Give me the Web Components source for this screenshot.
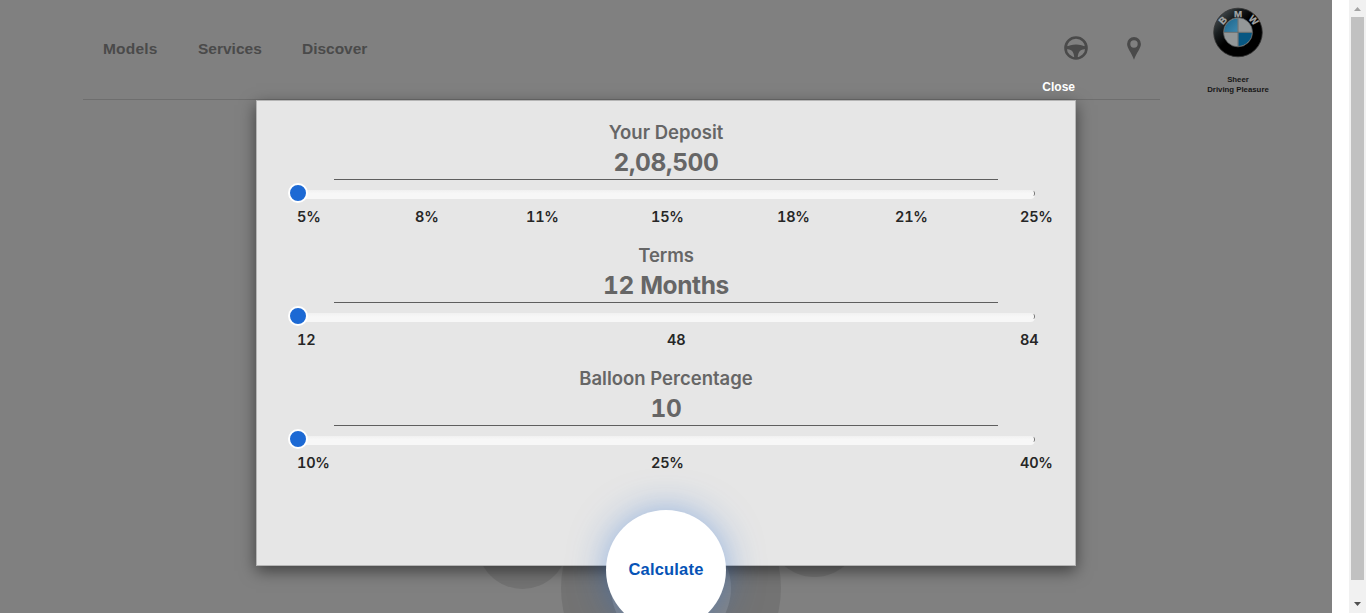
<!DOCTYPE html>
<html lang="en"><head><meta charset="utf-8"><title>Finance calculator</title>
<style>html,body{margin:0;height:613px;overflow:hidden;background:#fff;font-family:"Liberation Sans",Arial,sans-serif}</style></head>
<body><finance-page></finance-page>
<script>
const define=(name,html)=>customElements.define(name,class extends HTMLElement{
  constructor(){super();this.attachShadow({mode:'open'}).innerHTML=html;}
});
define('nav-links',`<style>:host{display:flex;margin:39px 0 0 20px;height:20px;font:bold 15.5px/20px "Liberation Sans",sans-serif;color:#4a4a4a;white-space:nowrap}
span{display:block;letter-spacing:-.02px}.models{width:95px;letter-spacing:.2px}.services{width:104px;letter-spacing:0}</style><span class="models">Models</span><span class="services">Services</span><span>Discover</span>`);
define('wheel-icon',`<style>:host{display:block;width:24px;height:24px}svg{display:block}</style>
<svg width="24" height="24" viewBox="0 0 24 24"><circle cx="12" cy="12" r="10.5" fill="none" stroke="#4a4a4a" stroke-width="2.6"/><path fill="#4a4a4a" d="M2 10.2C5 9.9 7.8 8.4 12 8.4S19 9.9 22 10.2V12.9C17.5 13.1 13.7 14.4 13.7 22.5H10.3C10.3 14.4 6.5 13.1 2 12.9Z"/></svg>`);
define('pin-icon',`<style>:host{display:block;width:14px;height:23px}svg{display:block}</style>
<svg width="14" height="23" viewBox="0 0 14 23"><path fill="#4a4a4a" fill-rule="evenodd" d="M7 .1A6.9 6.9 0 0 0 .1 7C.1 11.3 4.6 15.8 7 22.8C9.4 15.8 13.9 11.3 13.9 7A6.9 6.9 0 0 0 7 .1ZM7 3.3A3.7 3.7 0 1 1 7 10.7A3.7 3.7 0 1 1 7 3.3Z"/></svg>`);
define('brand-logo',`<style>:host{display:block;width:80px;text-align:center;color:#171717;font:bold 7.8px/10px "Liberation Sans",sans-serif}svg{display:block;margin:7px auto 17px}div{white-space:nowrap}</style>
<svg width="52" height="51" viewBox="0 0 52 51"><defs><linearGradient id="r" x1="0" y1=".1" x2=".6" y2=".7"><stop stop-color="#545b5e"/><stop offset=".4" stop-color="#1a1f21"/><stop offset=".7" stop-color="#000"/></linearGradient><linearGradient id="b" x2="1" y2="1"><stop stop-color="#1a6389"/><stop offset="1" stop-color="#3c87ae"/></linearGradient></defs>
<circle cx="26" cy="25.5" r="24.3" fill="url(#r)" stroke="#333" stroke-width=".8"/><circle cx="26" cy="25.3" r="14.5" fill="#939798"/><path d="M25.7 25V11.5A13.9 13.9 0 0 0 12 25Z" fill="url(#b)"/><path d="M26.4 25.7H40A13.8 13.8 0 0 1 26.4 39Z" fill="#075782"/><path d="M26 11V40M11.8 25.3H40.2" stroke="#5f6566" stroke-width=".8"/><circle cx="26" cy="25.3" r="14.6" fill="none" stroke="#54595a" stroke-width=".7"/>
<g fill="#a4a7a8" stroke="#a4a7a8" stroke-width=".25" font-family="Liberation Sans" font-size="9.8" font-weight="bold" text-anchor="middle"><text transform="translate(13.2 15.7) rotate(-49)">B</text><text x="26" y="9.7">M</text><text transform="translate(39 15.4) rotate(48)">W</text></g></svg><div>Sheer</div><div>Driving Pleasure</div>`);
define('site-header',`<style>:host{display:flex;height:100px}.bar{box-sizing:border-box;width:1077px;height:100px;margin-left:83px;border-bottom:1px solid #6e6e6e;display:flex}.icons{display:flex;margin-left:auto;margin-right:19px;gap:39px}wheel-icon{margin-top:36px}pin-icon{margin-top:37px}brand-logo{margin-left:38px}</style>
<div class="bar"><nav-links></nav-links><div class="icons"><wheel-icon></wheel-icon><pin-icon></pin-icon></div></div><brand-logo></brand-logo>`);
define('range-field',`<style>:host{display:block;height:123px;color:#666;text-align:center;font-family:Inter,sans-serif;white-space:nowrap}
.title{height:30px;font:600 18.5px/30px Inter,sans-serif;letter-spacing:var(--ts,0)}.value{box-sizing:border-box;width:664px;height:33px;margin:0 auto;border-bottom:1px solid #5e5e5e;font:700 24.5px/30px Inter,sans-serif;font-variant-numeric:tabular-nums;letter-spacing:var(--vs,-.4px)}
.slider{height:26px;display:flex;align-items:center;padding-left:31px}.thumb{box-sizing:border-box;flex:none;width:20px;height:20px;border:2px solid #fff;border-radius:50%;background:#1c69d4;z-index:1}
.track{box-sizing:border-box;width:737px;height:9px;margin:3px 0 0 -10px;border-radius:5px;background:linear-gradient(#f1f1f1,#f7f7f7 40%);display:flex;justify-content:flex-end}.track:after{content:"";width:3px;height:5px;margin:1px 0;border-right:1px solid #777;border-radius:0 2px 2px 0}
.labels{display:grid;grid-template-columns:var(--cols);margin-left:40px;text-align:left;color:#262626;font:600 14.5px/22px Inter,sans-serif;font-variant-numeric:tabular-nums;letter-spacing:-.25px}</style>
<div class="title"><slot name="title"></slot></div><div class="value"><slot name="value"></slot></div><div class="slider"><div class="thumb"></div><div class="track"></div></div><div class="labels"><slot></slot></div>`);
define('calculate-button',`<style>:host{position:absolute;left:349px;top:409px;width:120px;height:120px;border-radius:50%;background:#fff;color:#0653b6;box-shadow:0 0 40px -5px #1c69d490;font:bold 16.5px/119px "Liberation Sans",sans-serif;letter-spacing:.18px;text-align:center}</style><slot></slot>`);
define('finance-dialog',`<style>:host{box-sizing:border-box;display:block;position:absolute;left:256px;top:100px;width:820px;height:466px;padding-top:16px;border:1px solid #b5b5b5;background:#e6e6e6;box-shadow:0 5px 15px rgba(0,0,0,.5)}
.close{position:absolute;right:0;top:-22px;color:#fff;font:bold 12px/16px "Liberation Sans",sans-serif}</style>
<div class="close">Close</div>
<range-field style="--cols:118px 111px 125px 126px 118px 125px 40px"><span slot="title">Your Deposit</span><span slot="value">2,08,500</span><span>5%</span><span>8%</span><span>11%</span><span>15%</span><span>18%</span><span>21%</span><span>25%</span></range-field>
<range-field style="--ts:-.1px;--cols:370px 353px 40px"><span slot="title">Terms</span><span slot="value">12 Months</span><span>12</span><span>48</span><span>84</span></range-field>
<range-field style="--cols:354px 369px 40px"><span slot="title">Balloon Percentage</span><span slot="value">10</span><span>10%</span><span>25%</span><span>40%</span></range-field>
<calculate-button>Calculate</calculate-button>`);
define('background-dial',`<style>:host{position:absolute;left:0;top:480px;width:1332px;height:133px}svg{display:block}</style><svg width="1332" height="133" viewBox="0 480 1332 133"><g fill="#737373"><circle cx="522.5" cy="544" r="45"/><circle cx="814.5" cy="531" r="46"/><circle cx="671" cy="588" r="110"/></g><circle cx="671" cy="588" r="60" fill="#858585"/></svg>`);
define('scroll-rail',`<style>:host{display:flex;flex-direction:column;align-items:center;width:17px;height:613px;background:#f1f1f1}.thumb{width:13px;height:563px;background:#c1c1c1}svg{display:block}</style><svg width="17" height="17"><path d="M5 11L8.5 7L12 11Z" fill="#a3a3a3"/></svg><div class="thumb"></div><svg width="17" height="33"><path d="M5 22H12L8.5 26Z" fill="#505050"/></svg>`);
define('finance-page',`<style>:host{display:flex;width:1366px;height:613px;overflow:hidden}.page{position:relative;width:1332px;height:613px;background:#808080;overflow:hidden}scroll-rail{margin-left:auto}</style><div class="page"><site-header></site-header><background-dial></background-dial><finance-dialog></finance-dialog></div><scroll-rail></scroll-rail>`);
</script></body></html>
